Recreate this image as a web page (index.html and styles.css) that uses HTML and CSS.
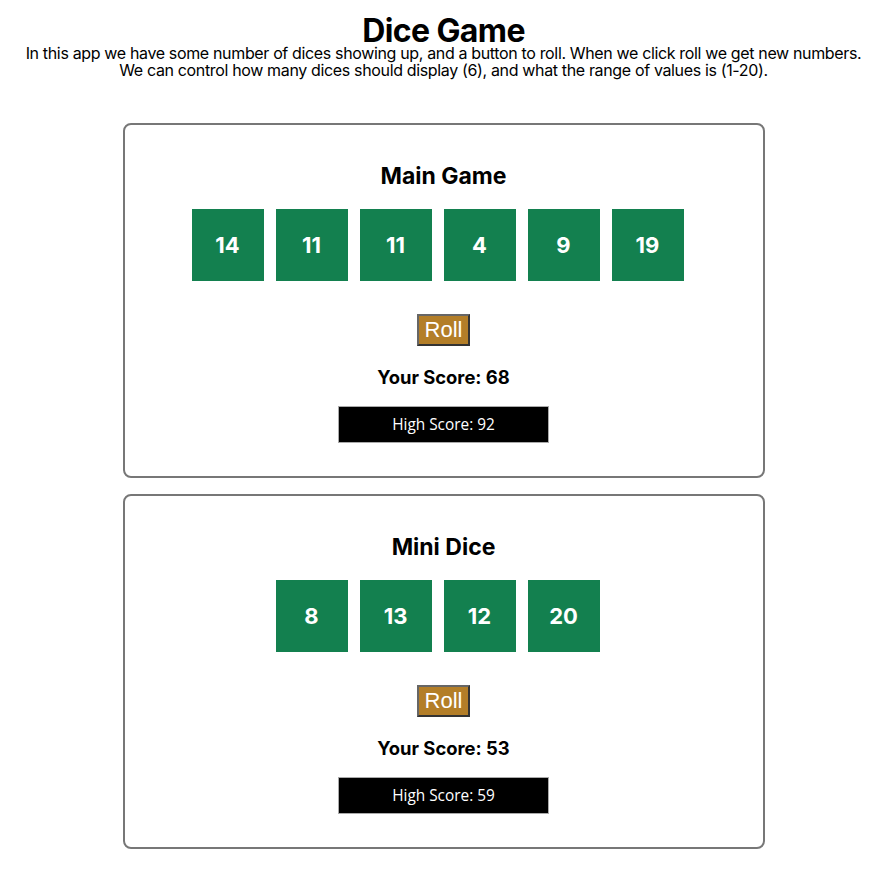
FILE: index.html
```html
<!DOCTYPE html>
<html lang="en">
<head>
<meta charset="utf-8">
<title>Dice Game</title>
<link rel="stylesheet" href="styles.css">
</head>
<body>
  <h1 class="title">Dice Game</h1>
  <p class="intro">In this app we have some number of dices showing up, and a button to roll. When we click roll we get new numbers.<br>We can control how many dices should display (6), and what the range of values is (1-20).</p>

  <section class="game">
    <h2 class="game-title">Main Game</h2>
    <div class="dice-row">
      <div class="die">14</div>
      <div class="die">11</div>
      <div class="die">11</div>
      <div class="die">4</div>
      <div class="die">9</div>
      <div class="die">19</div>
    </div>
    <button class="roll">Roll</button>
    <p class="score">Your Score: 68</p>
    <div class="high-score">High Score: 92</div>
  </section>

  <section class="game">
    <h2 class="game-title">Mini Dice</h2>
    <div class="dice-row">
      <div class="die">8</div>
      <div class="die">13</div>
      <div class="die">12</div>
      <div class="die">20</div>
    </div>
    <button class="roll">Roll</button>
    <p class="score">Your Score: 53</p>
    <div class="high-score">High Score: 59</div>
  </section>
</body>
</html>
```

FILE: styles.css
```css
html {
  margin: 0;
  padding: 0;
}

body {
  margin: 0;
  padding: 0 8px 8px;
  font-family: Inter, "Noto Sans", sans-serif;
  color: #000;
  background: #fff;
}

.title {
  margin: 0;
  padding-top: 18px;
  font-size: 32px;
  line-height: 26px;
  font-weight: 700;
  letter-spacing: -0.6px;
  text-align: center;
}

.intro {
  margin: 1px 0 44px;
  font-size: 16px;
  line-height: 17px;
  letter-spacing: -0.35px;
  text-align: center;
  white-space: nowrap;
}

.game {
  width: 642px;
  box-sizing: border-box;
  margin: 0 auto 16px;
  border: 2px solid #777;
  border-radius: 8px;
  padding: 37px 0 33px;
  display: flex;
  flex-direction: column;
  align-items: center;
}

.game-title {
  margin: 0;
  font-size: 23px;
  line-height: 28px;
  font-weight: 700;
}

.dice-row {
  display: flex;
  margin-top: 19px;
}

.die {
  width: 72px;
  height: 72px;
  margin-right: 12px;
  background: #13804f;
  color: #fff;
  font-size: 22px;
  font-weight: 700;
  display: flex;
  align-items: center;
  justify-content: center;
}

.roll {
  margin-top: 33px;
  padding: 2px 6px;
  border: 2px solid;
  border-color: #666 #333 #333 #666;
  background: #b37e28;
  color: #fff;
  font-family: "Liberation Sans", Arial, sans-serif;
  font-size: 22px;
  line-height: 24px;
  cursor: pointer;
}

.score {
  margin: 20px 0 0;
  font-size: 18.4px;
  line-height: 22px;
  font-weight: 700;
}

.high-score {
  margin-top: 18px;
  width: 211px;
  height: 37px;
  box-sizing: border-box;
  border: 1px solid #aaa;
  background: #000;
  color: #fff;
  font-family: "Open Sans", sans-serif;
  font-size: 15.4px;
  display: flex;
  align-items: center;
  justify-content: center;
}
```
